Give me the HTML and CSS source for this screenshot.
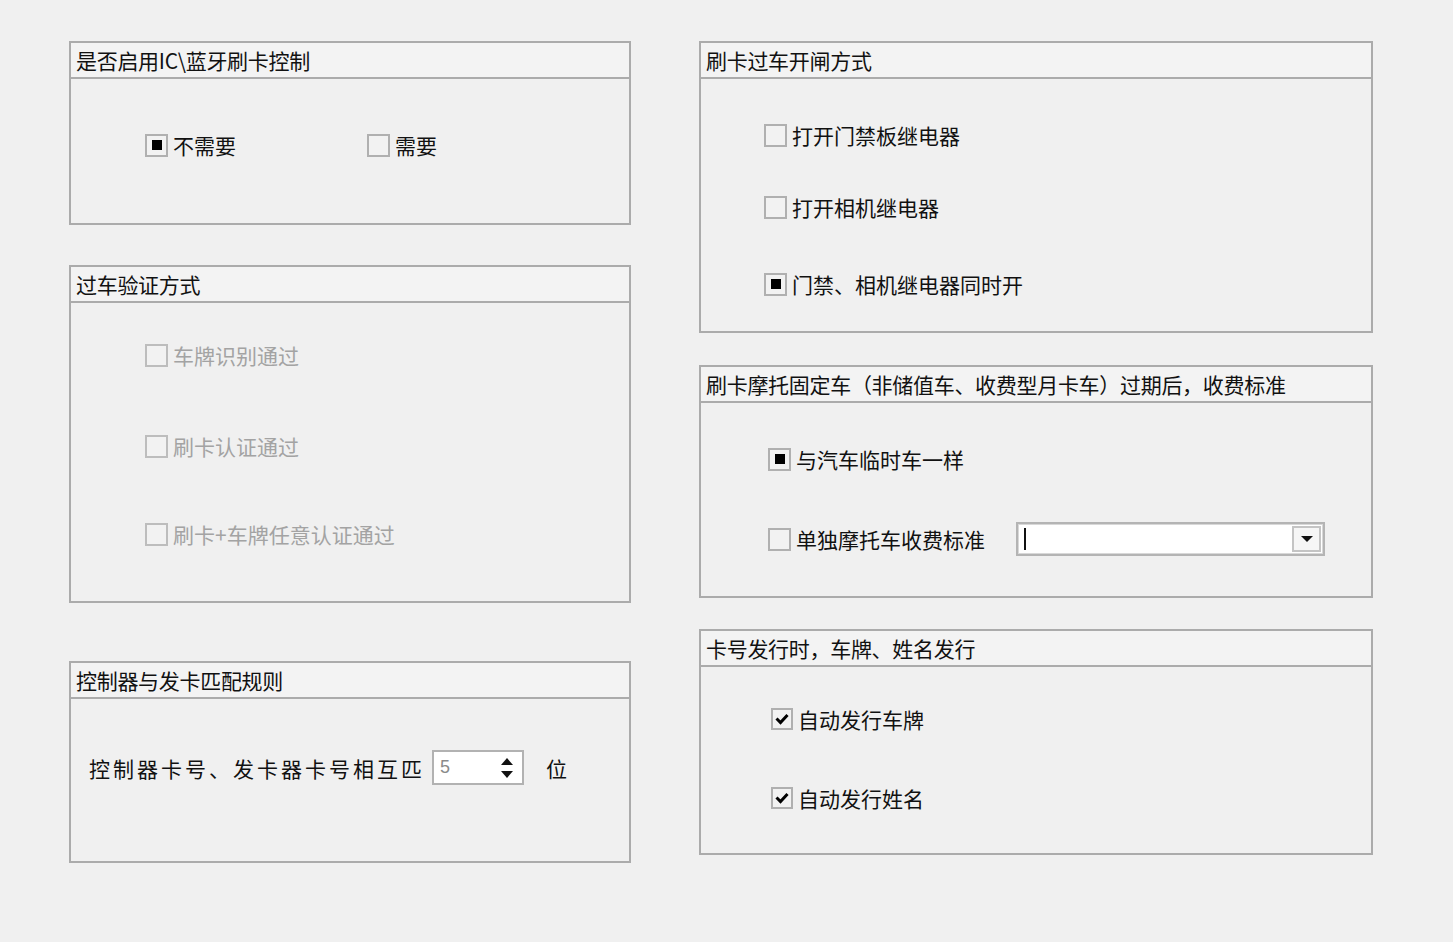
FILE: index.html
```html
<!DOCTYPE html>
<html lang="zh">
<head>
<meta charset="utf-8">
<title>刷卡设置</title>
<link rel="stylesheet" href="styles.css">
</head>
<body>
<div class="page">
  <div class="col col-left">
    <section class="box box1">
      <div class="box-head">是否启用IC\蓝牙刷卡控制</div>
      <div class="box-body b1">
        <div class="hrow">
          <label class="opt opt-w"><span class="cb"><span class="dot"></span></span><span>不需要</span></label>
          <label class="opt"><span class="cb"></span><span>需要</span></label>
        </div>
      </div>
    </section>

    <section class="box box2">
      <div class="box-head">过车验证方式</div>
      <div class="box-body b2">
        <label class="opt dis"><span class="cb"></span><span>车牌识别通过</span></label>
        <label class="opt dis"><span class="cb"></span><span>刷卡认证通过</span></label>
        <label class="opt dis"><span class="cb"></span><span>刷卡+车牌任意认证通过</span></label>
      </div>
    </section>

    <section class="box box3">
      <div class="box-head">控制器与发卡匹配规则</div>
      <div class="box-body b3">
        <div class="hrow center">
          <span class="spaced">控制器卡号、发卡器卡号相互匹</span>
          <div class="spin">
            <span class="spin-val">5</span>
            <span class="spin-btns">
              <svg width="14" height="26" viewBox="0 0 14 26"><path d="M7 3 L13 10 L1 10 Z" fill="#111"/><path d="M1 16 L13 16 L7 23 Z" fill="#111"/></svg>
            </span>
          </div>
          <span class="unit">位</span>
        </div>
      </div>
    </section>
  </div>

  <div class="col col-right">
    <section class="box box4">
      <div class="box-head">刷卡过车开闸方式</div>
      <div class="box-body b4">
        <label class="opt"><span class="cb"></span><span>打开门禁板继电器</span></label>
        <label class="opt"><span class="cb"></span><span>打开相机继电器</span></label>
        <label class="opt"><span class="cb"><span class="dot"></span></span><span>门禁、相机继电器同时开</span></label>
      </div>
    </section>

    <section class="box box5">
      <div class="box-head">刷卡摩托固定车（非储值车、收费型月卡车）过期后，收费标准</div>
      <div class="box-body b5">
        <label class="opt"><span class="cb"><span class="dot"></span></span><span>与汽车临时车一样</span></label>
        <div class="hrow center">
          <label class="opt opt-w2"><span class="cb"></span><span>单独摩托车收费标准</span></label>
          <div class="combo">
            <span class="caret"></span>
            <span class="combo-btn">
              <svg width="12" height="8" viewBox="0 0 12 8"><path d="M0 1 L12 1 L6 7 Z" fill="#111"/></svg>
            </span>
          </div>
        </div>
      </div>
    </section>

    <section class="box box6">
      <div class="box-head">卡号发行时，车牌、姓名发行</div>
      <div class="box-body b6">
        <label class="opt"><span class="cb sm"><svg width="14" height="12" viewBox="0 0 14 12"><path d="M1.5 5.5 L5.5 9.5 L12.5 2" fill="none" stroke="#000" stroke-width="3"/></svg></span><span>自动发行车牌</span></label>
        <label class="opt"><span class="cb sm"><svg width="14" height="12" viewBox="0 0 14 12"><path d="M1.5 5.5 L5.5 9.5 L12.5 2" fill="none" stroke="#000" stroke-width="3"/></svg></span><span>自动发行姓名</span></label>
      </div>
    </section>
  </div>
</div>
</body>
</html>
```

FILE: styles.css
```css
* { box-sizing: border-box; }
html, body {
  margin: 0;
  padding: 0;
  background: #f0f0f0;
}
body {
  width: 1453px;
  height: 942px;
  overflow: hidden;
  font-family: "Noto Sans CJK SC", "Noto Sans", sans-serif;
  font-size: 21px;
  color: #111;
}
.page {
  display: flex;
  gap: 68px;
  padding: 41px 0 0 69px;
}
.col {
  display: flex;
  flex-direction: column;
}
.col-left { width: 562px; }
.col-right { width: 674px; }

.box {
  border: 2px solid #ababab;
  background: #f0f0f0;
  display: flex;
  flex-direction: column;
}
.box-head {
  height: 36px;
  border-bottom: 2px solid #ababab;
  background: #f3f3f3;
  padding-left: 5px;
  line-height: 34px;
  white-space: nowrap;
  letter-spacing: -0.3px;
}
.box-body {
  display: flex;
  flex-direction: column;
}

.box1 { height: 184px; }
.box2 { height: 338px; margin-top: 40px; }
.box3 { height: 202px; margin-top: 58px; }
.box4 { height: 292px; }
.box5 { height: 233px; margin-top: 32px; }
.box6 { height: 226px; margin-top: 31px; }

.b1 { padding: 54px 0 0 74px; }
.b2 { padding: 40px 0 0 74px; gap: 67px; }
.b2 .opt:nth-child(3) { margin-top: -3px; }
.b3 { padding: 51px 0 0 18px; }
.b4 { padding: 44px 0 0 63px; gap: 48px; }
.b4 .opt:nth-child(3) { margin-top: 5px; }
.b5 { padding: 44px 0 0 67px; gap: 51px; }
.b6 { padding: 40px 0 0 70px; gap: 55px; }

.hrow { display: flex; }
.hrow.center { align-items: center; }

.opt {
  display: flex;
  align-items: center;
  gap: 5px;
  height: 24px;
  line-height: 24px;
  white-space: nowrap;
}
.opt-w { width: 222px; }
.opt-w2 { width: 248px; }
.opt.dis { color: #a3a3a3; }

.cb {
  width: 23px;
  height: 23px;
  border: 2px solid #b0b0b0;
  background: #f2f2f2;
  display: flex;
  align-items: center;
  justify-content: center;
  flex: none;
}
.cb.sm { width: 22px; height: 22px; }
.dis .cb { border-color: #bdbdbd; }
.dot {
  width: 10px;
  height: 10px;
  background: #000;
}

.spaced {
  letter-spacing: 3px;
  width: 343px;
  overflow: hidden;
  white-space: nowrap;
  line-height: 30px;
}
.spin {
  width: 92px;
  height: 35px;
  border: 2px solid #b2b2b2;
  background: #fff;
  display: flex;
  align-items: center;
  justify-content: space-between;
  padding: 0 8px 0 6px;
}
.spin-val {
  font-family: "Liberation Sans", Arial, sans-serif;
  font-size: 18px;
  color: #8a8a8a;
}
.spin-btns { display: flex; align-items: center; }
.unit { margin-left: 22px; }

.combo {
  width: 309px;
  height: 34px;
  border: 2px solid #b4b4b4;
  outline: 1px solid #d8d8d8;
  outline-offset: -3px;
  background: #fff;
  display: flex;
  align-items: center;
  justify-content: space-between;
  padding: 0 2px 0 6px;
}
.caret {
  width: 2px;
  height: 22px;
  background: #111;
}
.combo-btn {
  width: 29px;
  height: 26px;
  border: 2px solid #c4c4c4;
  background: #f6f6f6;
  display: flex;
  align-items: center;
  justify-content: center;
}
```
